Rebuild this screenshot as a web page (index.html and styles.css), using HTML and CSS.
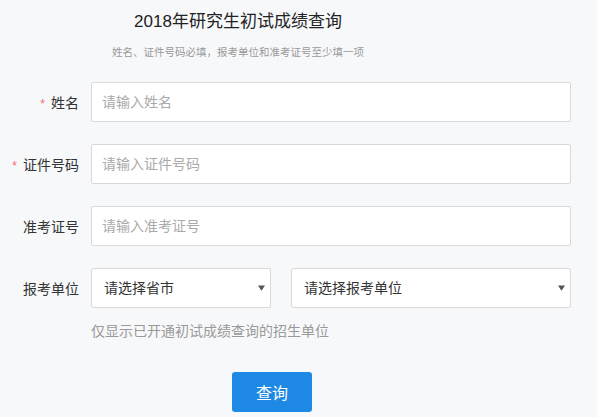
FILE: index.html
```html
<!DOCTYPE html>
<html lang="zh-CN">

<head>
    <meta charset="UTF-8">
    <title>2018年研究生初试成绩查询</title>
    <link rel="stylesheet" href="styles.css">
</head>

<body>

    <div class="page">

        <div class="header">
            <h1>2018年研究生初试成绩查询</h1>
            <p class="sub">姓名、证件号码必填，报考单位和准考证号至少填一项</p>
        </div>

        <form class="form" onsubmit="return false">

            <div class="row">
                <label class="label" for="xm"><span class="req">*</span>姓名</label>
                <input class="field" type="text" id="xm" placeholder="请输入姓名" />
            </div>

            <div class="row">
                <label class="label" for="zjhm"><span class="req">*</span>证件号码</label>
                <input class="field" type="text" id="zjhm" placeholder="请输入证件号码" />
            </div>

            <div class="row">
                <label class="label" for="zkzh">准考证号</label>
                <input class="field" type="text" id="zkzh" placeholder="请输入准考证号" />
            </div>

            <div class="row">
                <label class="label" for="ssdm">报考单位</label>
                <div class="selects">
                    <div class="select-wrap small">
                        <select id="ssdm">
                            <option>请选择省市</option>
                        </select>
                        <svg class="arrow" viewBox="0 0 8 6"><path d="M0 0h8L4 6z" /></svg>
                    </div>
                    <div class="select-wrap">
                        <select id="dwdm">
                            <option>请选择报考单位</option>
                        </select>
                        <svg class="arrow" viewBox="0 0 8 6"><path d="M0 0h8L4 6z" /></svg>
                    </div>
                </div>
            </div>

            <div class="hint">仅显示已开通初试成绩查询的招生单位</div>

            <div class="actions">
                <button class="btn" type="submit">查询</button>
            </div>

        </form>

    </div>

</body>

</html>
```

FILE: styles.css
```css
:root {
    --bg: #f7f8fa;
    --text: #333333;
    --muted: #999999;
    --border: #d9d9d9;
    --primary: #1e88e5;
    --danger: #f56c6c;
}

* {
    box-sizing: border-box;
}

body {
    margin: 0;
    background: var(--bg);
    color: var(--text);
    font-family: "Liberation Sans", "Noto Sans CJK SC", sans-serif;
}

.page {
    width: 597px;
    padding-top: 10px;
}

.header {
    width: 476px;
    text-align: center;
}

h1 {
    margin: 0;
    font-size: 17px;
    font-weight: normal;
    line-height: 24px;
    color: #222;
}

.sub {
    margin: 8px 0 0;
    font-size: 10.5px;
    line-height: 20px;
    color: var(--muted);
}

.form {
    margin-top: 20px;
}

.row {
    display: flex;
    align-items: center;
    gap: 12px;
    margin-bottom: 22px;
}

.label {
    width: 79px;
    flex: none;
    text-align: right;
    font-size: 14px;
    color: var(--text);
}

.req {
    color: var(--danger);
    font-size: 12px;
    margin-right: 6px;
}

.field {
    width: 480px;
    height: 40px;
    padding: 0 10px;
    border: 1px solid var(--border);
    border-radius: 2px;
    background: #fff;
    font-family: inherit;
    font-size: 14px;
    color: var(--text);
    outline: none;
}

.field::placeholder {
    color: #aaaaaa;
}

.selects {
    display: flex;
    gap: 20px;
    width: 480px;
}

.select-wrap {
    position: relative;
    flex: 1;
}

.select-wrap.small {
    flex: none;
    width: 180px;
}

.select-wrap select {
    width: 100%;
    height: 40px;
    padding: 0 24px 0 12px;
    border: 1px solid var(--border);
    border-radius: 2px;
    background: #fff;
    font-family: inherit;
    font-size: 14px;
    color: var(--text);
    appearance: none;
    -webkit-appearance: none;
    outline: none;
}

.arrow {
    position: absolute;
    right: 6px;
    top: 17px;
    width: 7px;
    height: 6px;
    fill: #555;
    pointer-events: none;
}

.hint {
    margin: -9px 0 0 91px;
    font-size: 14px;
    line-height: 20px;
    color: var(--muted);
}

.actions {
    padding-left: 232px;
    margin-top: 31px;
}

.btn {
    width: 80px;
    height: 40px;
    border: 0;
    border-radius: 3px;
    background: var(--primary);
    color: #fff;
    font-family: inherit;
    font-size: 16px;
    cursor: pointer;
}
```
